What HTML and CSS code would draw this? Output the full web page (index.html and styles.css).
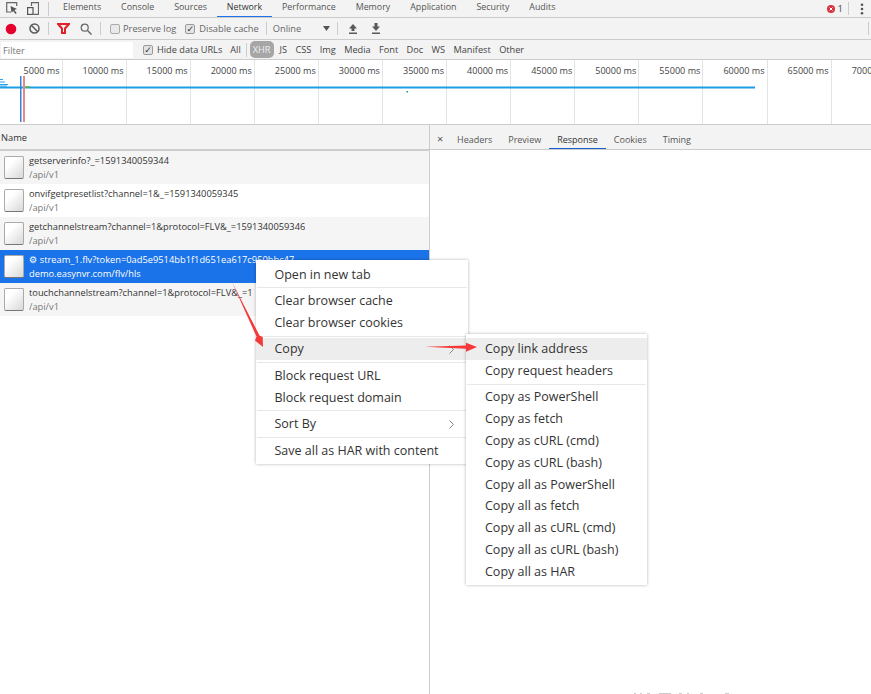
FILE: index.html
```html
<!DOCTYPE html>
<html lang="en">
<head>
<meta charset="utf-8">
<title>DevTools Network</title>
<link rel="stylesheet" href="styles.css">
</head>
<body>
<div class="devtools">
  <div class="tabbar">
    <div class="tab-icons">
      <svg width="12" height="13" viewBox="0 0 12 13"><path d="M5 10H.7V.7h10V4" fill="none" stroke="#666" stroke-width="1.200"/><path d="M4.500 4l6.500 3-2.700.9 2.400 3-1.200 1-2.300-3-1.600 1.800z" fill="#555"/></svg>
      <svg width="12" height="13" viewBox="0 0 12 13"><path d="M4.500 4V.6h7v11.800H6.500" fill="none" stroke="#666" stroke-width="1.200"/><rect x=".6" y="5.600" width="5.400" height="6.800" fill="none" stroke="#555" stroke-width="1.200"/></svg>
    </div>
    <div class="vsep tall"></div>
    <nav class="tabs">
      <span class="tab">Elements</span><span class="tab">Console</span><span class="tab">Sources</span><span class="tab active">Network</span><span class="tab">Performance</span><span class="tab">Memory</span><span class="tab">Application</span><span class="tab">Security</span><span class="tab">Audits</span>
    </nav>
    <div class="tab-right">
      <svg width="8" height="8" viewBox="0 0 8 8"><circle cx="4" cy="4" r="4" fill="#d9303e"/><path d="M2.500 2.500l3 3M5.500 2.500l-3 3" stroke="#fff" stroke-width="1"/></svg>
      <span class="err">1</span>
      <div class="vsep err-sep"></div>
      <svg width="4" height="12" viewBox="0 0 4 12"><circle cx="2" cy="1.700" r="1.300" fill="#555"/><circle cx="2" cy="6" r="1.300" fill="#555"/><circle cx="2" cy="10.300" r="1.300" fill="#555"/></svg>
    </div>
  </div>

  <div class="toolbar">
    <svg class="rec" width="12" height="12" viewBox="0 0 12 12"><circle cx="6" cy="6" r="5.300" fill="#e4002b"/></svg>
    <svg class="clear" width="11" height="11" viewBox="0 0 11 11"><circle cx="5.500" cy="5.500" r="4.500" fill="none" stroke="#5a5a5a" stroke-width="1.500"/><path d="M2.300 2.300l6.400 6.400" stroke="#5a5a5a" stroke-width="1.500"/></svg>
    <div class="vsep sep-a"></div>
    <svg class="funnel" width="13" height="11" viewBox="0 0 13 11"><path d="M1 1h11L8 5.500V10H5V5.500z" fill="none" stroke="#e2202c" stroke-width="2"/></svg>
    <svg class="search" width="12" height="12" viewBox="0 0 12 12"><circle cx="4.700" cy="4.700" r="3.500" fill="none" stroke="#666" stroke-width="1.200"/><path d="M7.500 7.500l4 4" stroke="#666" stroke-width="1.500"/></svg>
    <div class="vsep sep-b"></div>
    <span class="check"></span><span class="lbl preserve">Preserve log</span>
    <span class="check on">✓</span><span class="lbl disable">Disable cache</span>
    <div class="vsep"></div>
    <span class="lbl online">Online</span>
    <svg class="caret" width="7" height="5" viewBox="0 0 7 5"><path d="M0 0h7L3.500 5z" fill="#555"/></svg>
    <div class="vsep"></div>
    <svg class="up" width="10" height="11" viewBox="0 0 10 11"><path d="M5 1L9 5.500H6.500V8h-3V5.500H1zM1 9.500h8V11H1z" fill="#5a5a5a"/></svg>
    <svg class="down" width="10" height="11" viewBox="0 0 10 11"><path d="M3.500 0h3v3.500H9L5 8 1 3.500h2.500zM1 9.500h8V11H1z" fill="#5a5a5a"/></svg>
    <div class="vsep far"></div>
  </div>

  <div class="filterbar">
    <div class="filter-input">Filter</div>
    <span class="check on">✓</span><span class="lbl hide">Hide data URLs</span>
    <span class="ftype all">All</span>
    <div class="vsep short"></div>
    <span class="ftype xhr">XHR</span>
    <span class="ftype">JS</span><span class="ftype">CSS</span><span class="ftype">Img</span><span class="ftype">Media</span><span class="ftype">Font</span><span class="ftype">Doc</span><span class="ftype">WS</span><span class="ftype">Manifest</span><span class="ftype">Other</span>
  </div>

  <div class="timeline">
    <div class="tick first">5000 ms</div><div class="tick">10000 ms</div><div class="tick">15000 ms</div><div class="tick">20000 ms</div><div class="tick">25000 ms</div><div class="tick">30000 ms</div><div class="tick">35000 ms</div><div class="tick">40000 ms</div><div class="tick">45000 ms</div><div class="tick">50000 ms</div><div class="tick">55000 ms</div><div class="tick">60000 ms</div><div class="tick">65000 ms</div><div class="tick last">7000</div>
    <svg class="tl-marks" width="871" height="64" viewBox="0 0 871 64">
      <path d="M0 19.500h3M0 22h5M0 24.500h8M0 26h7" stroke="#2aa3ea" stroke-width="1"/>
      <rect x="0" y="26.500" width="755" height="2" fill="#1c9fe6"/>
      <rect x="25" y="26.500" width="5" height="1.500" fill="#4cb050"/>
      <rect x="20" y="16" width="1.500" height="46" fill="#3b7fdc"/>
      <rect x="23" y="16" width="2" height="46" fill="#e08a8a"/>
      <rect x="406.500" y="31" width="1.500" height="1.500" fill="#1c8f9a"/>
    </svg>
  </div>

  <div class="split">
    <div class="names">
      <div class="names-head">Name</div>
      <div class="row odd"><span class="doc"></span><div class="row-text"><div class="rname">getserverinfo?_=1591340059344</div><div class="rpath">/api/v1</div></div></div>
      <div class="row"><span class="doc"></span><div class="row-text"><div class="rname">onvifgetpresetlist?channel=1&amp;_=1591340059345</div><div class="rpath">/api/v1</div></div></div>
      <div class="row odd"><span class="doc"></span><div class="row-text"><div class="rname">getchannelstream?channel=1&amp;protocol=FLV&amp;_=1591340059346</div><div class="rpath">/api/v1</div></div></div>
      <div class="row selected"><span class="doc"></span><div class="row-text"><div class="rname"><span class="gear">⚙</span> stream_1.flv?token=0ad5e9514bb1f1d651ea617c950bbc47</div><div class="rpath">demo.easynvr.com/flv/hls</div></div></div>
      <div class="row odd"><span class="doc"></span><div class="row-text"><div class="rname">touchchannelstream?channel=1&amp;protocol=FLV&amp;_=1</div><div class="rpath">/api/v1</div></div></div>
    </div>
    <div class="detail">
      <div class="detail-tabs">
        <span class="close">×</span>
        <span class="dtab">Headers</span><span class="dtab">Preview</span><span class="dtab active">Response</span><span class="dtab">Cookies</span><span class="dtab">Timing</span>
      </div>
    </div>
  </div>
</div>

<div class="menu main-menu">
  <div class="item">Open in new tab</div>
  <div class="sep"></div>
  <div class="item">Clear browser cache</div>
  <div class="item">Clear browser cookies</div>
  <div class="sep"></div>
  <div class="item hl">Copy<svg class="chev" width="5" height="9" viewBox="0 0 5 9"><path d="M.5.500l4 4-4 4" fill="none" stroke="#888"/></svg></div>
  <div class="sep"></div>
  <div class="item">Block request URL</div>
  <div class="item">Block request domain</div>
  <div class="sep"></div>
  <div class="item">Sort By<svg class="chev" width="5" height="9" viewBox="0 0 5 9"><path d="M.5.500l4 4-4 4" fill="none" stroke="#888"/></svg></div>
  <div class="sep"></div>
  <div class="item">Save all as HAR with content</div>
</div>

<div class="menu sub-menu">
  <div class="item hl">Copy link address</div>
  <div class="item">Copy request headers</div>
  <div class="sep"></div>
  <div class="item">Copy as PowerShell</div>
  <div class="item">Copy as fetch</div>
  <div class="item">Copy as cURL (cmd)</div>
  <div class="item">Copy as cURL (bash)</div>
  <div class="item">Copy all as PowerShell</div>
  <div class="item">Copy all as fetch</div>
  <div class="item">Copy all as cURL (cmd)</div>
  <div class="item">Copy all as cURL (bash)</div>
  <div class="item">Copy all as HAR</div>
</div>

<svg class="arrows" width="871" height="694" viewBox="0 0 871 694">
  <path d="M232 282L256.500 336.500 255 340.500 263 347 262.700 337 259.500 335.500z" fill="#f5393a"/>
  <path d="M425 346.800L466 345.500 466 342.700 477 347 466 351.700 466 348.800z" fill="#f5393a"/>
  <path d="M634 693.500h2M640 693.500h2M647 693.500h3M659 693.500h12M679 693.500h3M687 693.500h2M700 693.500h3M725 693.500h4" stroke="#ccc" stroke-width="1"/>
</svg>
```

FILE: styles.css
```css
* { box-sizing: border-box; }
html, body { margin: 0; padding: 0; height: 100%; overflow: hidden; background: #fff; }
body { font-family: "Open Sans", "Noto Sans", sans-serif; color: #444; }
.devtools { width: 871px; height: 694px; display: flex; flex-direction: column; }

.vsep { width: 1px; height: 13px; background: #ccc; flex: none; }
.vsep.tall { height: 14px; margin: 0 14px 0 0; }
.vsep.short { height: 14px; margin: 0 3px 0 5px; }
.vsep.far { margin: 0 2px 0 auto; }
.vsep.sep-a { margin-right: 8px; }
.vsep.sep-b { margin-right: 9px; }

.tabbar { height: 18px; flex: none; display: flex; align-items: center; background: #f3f3f3; border-bottom: 1px solid #ccc; }
.tab-icons { display: flex; align-items: center; gap: 9px; padding-left: 6px; width: 48px; flex: none; }
.tabs { display: flex; height: 17px; font-size: 8.900px; }
.tab { margin-right: 19.900px; line-height: 14px; color: #555; white-space: nowrap; position: relative; }
.tab.active { color: #333; }
.tab.active::after { content: ""; position: absolute; left: -10px; right: -10px; bottom: 0; height: 1.500px; background: #1a73e8; }
.tab-right { margin-left: auto; display: flex; align-items: center; padding-right: 7px; font-size: 9.500px; }
.err { margin: 0 5px 0 3px; }
.err-sep { margin-right: 11px; }

.toolbar { height: 22px; flex: none; display: flex; align-items: center; background: #f3f3f3; border-bottom: 1px solid #ccc; padding-left: 5px; }
.rec { margin-right: 12px; }
.clear { margin-right: 8px; }
.funnel { margin: 0 10px 0 0; }
.search { margin-right: 8px; }
.check { width: 10px; height: 10px; flex: none; border: 1px solid #aaa; border-radius: 2px; background: #e9e9e9; font-size: 9px; line-height: 8px; text-align: center; color: #333; font-family: "DejaVu Sans", sans-serif; }
.check.on { background: #e4e4e4; border-color: #999; }
.lbl { font-size: 9.300px; color: #666; margin-left: 3px; white-space: nowrap; }
.preserve { margin-right: 9px; }
.disable { margin-left: 4px; margin-right: 7px; }
.online { margin: 0 22px 0 6px; }
.caret { margin-right: 7px; }
.up { margin-left: 10px; }
.down { margin-left: 13px; }

.filterbar { height: 20px; flex: none; display: flex; align-items: center; background: #f3f3f3; border-bottom: 1px solid #ccc; padding-left: 1px; }
.filter-input { width: 132px; height: 16px; background: #fff; font-size: 9.300px; line-height: 18px; color: #757575; padding-left: 2px; margin-right: 10px; }
.hide { color: #444; margin-left: 4px; margin-right: 8px; font-size: 9.200px; }
.ftype { font-size: 9.200px; color: #444; margin-right: 8.400px; white-space: nowrap; line-height: 19px; }
.ftype.all { margin-right: 0; }
.ftype.xhr { background: #a6a6a6; color: #eee; border-radius: 5px; padding: 0 3px; margin-right: 6px; height: 17px; line-height: 17px; }

.timeline { height: 65px; flex: none; display: flex; position: relative; border-bottom: 1px solid #ccc; overflow: hidden; background: #fff; }
.tick { width: 64.100px; flex: none; border-right: 1px solid #e4e4e4; font-size: 9.100px; color: #444; text-align: right; padding: 4px 2px 0 0; white-space: nowrap; }
.tick.first { width: 62.500px; }
.tick.last { border-right: 0; text-align: left; padding-left: 20px; }
.tl-marks { position: absolute; left: 0; top: 0; }

.split { flex: 1; display: flex; min-height: 0; }
.names { width: 430px; flex: none; border-right: 1px solid #ccc; background: #fff; }
.names-head { height: 26px; background: #f3f3f3; border-bottom: 2px solid #ccc; font-size: 9.300px; line-height: 26px; padding-left: 1px; color: #333; }
.row { height: 33px; display: flex; align-items: center; padding-left: 4px; background: #fff; }
.row.odd { background: #f5f5f5; }
.row.selected { background: #1a73e8; color: #fff; }
.doc { width: 20px; height: 23px; flex: none; margin-top: -1px; border: 1px solid #aaa; border-bottom-color: #777; border-radius: 2px; background: linear-gradient(135deg, #fff 30%, #d8d8d8); }
.row-text { margin-left: 5px; font-size: 9.300px; line-height: 14px; white-space: nowrap; overflow: hidden; }
.rname { color: #333; }
.rpath { color: #777; }
.row.selected .rname, .row.selected .rpath { color: #fff; }
.gear { font-family: "DejaVu Sans", sans-serif; }

.detail { flex: 1; min-width: 0; }
.detail-tabs { height: 25px; display: flex; align-items: center; background: #f3f3f3; border-bottom: 1px solid #ccc; font-size: 9px; color: #555; }
.close { width: 27px; padding: 4px 0 0 7px; font-size: 11px; line-height: 20px; color: #555; }
.dtab { margin-right: 16px; position: relative; line-height: 16px; height: 24px; padding-top: 7px; }
.dtab.active { color: #333; }
.dtab.active::after { content: ""; position: absolute; left: -8px; right: -8px; bottom: 0; height: 1.500px; background: #1a5fd0; }

.menu { position: absolute; background: #fff; box-shadow: 0 0 3px rgba(0,0,0,.3); padding: 3.500px 0 2.500px; font-size: 12.500px; color: #333; }
.main-menu { left: 256px; top: 260px; width: 212px; }
.sub-menu { left: 466px; top: 334px; width: 181px; padding-top: 4.100px; }
.item { height: 21.800px; line-height: 21.800px; padding-left: 18.500px; position: relative; white-space: nowrap; }
.sub-menu .item { padding-left: 19px; }
.item.hl { background: #ededed; }
.chev { position: absolute; right: 14px; top: 7px; }
.sep { height: 1px; background: #e8e8e8; margin: 2px 1px 1.700px; }
.arrows { position: absolute; left: 0; top: 0; pointer-events: none; }
```
